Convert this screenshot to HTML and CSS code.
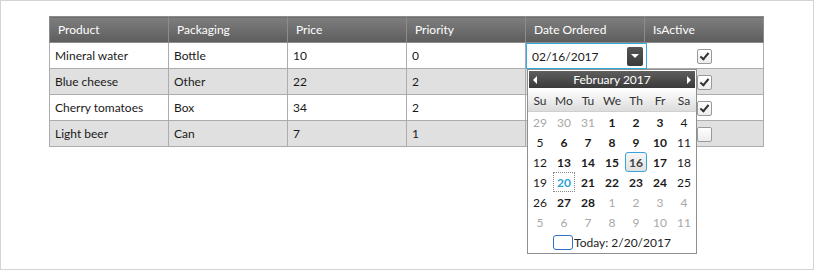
FILE: index.html
```html
<!DOCTYPE html>
<html lang="en">
<head>
  <meta charset="UTF-8">
  <title>Grid with date editor</title>
  <link rel="stylesheet" href="styles.css">
</head>
<body>
  <div class="frame">
    <table class="grid">
      <thead>
        <tr>
          <th>Product</th>
          <th>Packaging</th>
          <th>Price</th>
          <th>Priority</th>
          <th>Date Ordered</th>
          <th>IsActive</th>
        </tr>
      </thead>
      <tbody>
        <tr>
          <td>Mineral water</td>
          <td>Bottle</td>
          <td>10</td>
          <td>0</td>
          <td class="editing">
            <div class="date-editor">
              <span class="date-text">02/16/2017</span>
              <span class="drop-btn"><span class="caret"></span></span>
            </div>
            <div class="calendar">
              <div class="cal-head">
                <span class="arrow left"></span>
                <span class="cal-title">February 2017</span>
                <span class="arrow right"></span>
              </div>
              <div class="cal-names">
                <span>Su</span><span>Mo</span><span>Tu</span><span>We</span><span>Th</span><span>Fr</span><span>Sa</span>
              </div>
              <div class="cal-days">
                <span class="other">29</span><span class="other">30</span><span class="other">31</span><span class="wd">1</span><span class="wd">2</span><span class="wd">3</span><span>4</span>
                <span>5</span><span class="wd">6</span><span class="wd">7</span><span class="wd">8</span><span class="wd">9</span><span class="wd">10</span><span>11</span>
                <span>12</span><span class="wd">13</span><span class="wd">14</span><span class="wd">15</span><span class="wd selected">16</span><span class="wd">17</span><span>18</span>
                <span>19</span><span class="wd today">20</span><span class="wd">21</span><span class="wd">22</span><span class="wd">23</span><span class="wd">24</span><span>25</span>
                <span>26</span><span class="wd">27</span><span class="wd">28</span><span class="other">1</span><span class="other">2</span><span class="other">3</span><span class="other">4</span>
                <span class="other">5</span><span class="other">6</span><span class="other">7</span><span class="other">8</span><span class="other">9</span><span class="other">10</span><span class="other">11</span>
              </div>
              <div class="cal-today">
                <span class="today-box"></span>
                <span>Today: 2/20/2017</span>
              </div>
            </div>
          </td>
          <td class="check-cell"><span class="check checked"></span></td>
        </tr>
        <tr class="alt">
          <td>Blue cheese</td>
          <td>Other</td>
          <td>22</td>
          <td>2</td>
          <td></td>
          <td class="check-cell"><span class="check checked"></span></td>
        </tr>
        <tr>
          <td>Cherry tomatoes</td>
          <td>Box</td>
          <td>34</td>
          <td>2</td>
          <td></td>
          <td class="check-cell"><span class="check checked"></span></td>
        </tr>
        <tr class="alt">
          <td>Light beer</td>
          <td>Can</td>
          <td>7</td>
          <td>1</td>
          <td></td>
          <td class="check-cell"><span class="check"></span></td>
        </tr>
      </tbody>
    </table>
  </div>
</body>
</html>
```

FILE: styles.css
```css
body {
  margin: 0;
  font-family: 'Segoe UI', Lato, 'Open Sans', sans-serif;
  font-size: 12px;
  color: #1a1a1a;
}

.frame {
  box-sizing: border-box;
  width: 814px;
  height: 270px;
  border: 1px solid #d4d4d4;
  padding: 15px 0 0 48px;
}

.grid {
  border-collapse: collapse;
  table-layout: fixed;
  width: 715px;
}

.grid th,
.grid td {
  width: 119px;
  height: 26px;
  border: 1px solid #acacac;
  padding: 0 5px;
  text-align: left;
  white-space: nowrap;
  box-sizing: border-box;
}

.grid th {
  padding: 0 8px;
  font-weight: normal;
  color: #fff;
  background: linear-gradient(#7e7e7e, #5d5d5d);
  border-color: #8c8c8c;
}

.grid tr.alt td {
  background: #e0e0e0;
}

.editing {
  position: relative;
}

.date-editor {
  position: absolute;
  left: 0;
  top: 0;
  width: 121px;
  height: 26px;
  box-sizing: border-box;
  border: 1px solid #35a8e0;
  background: #fff;
  display: flex;
  align-items: center;
  justify-content: space-between;
  padding: 0 3px 0 5px;
}

.drop-btn {
  width: 16px;
  height: 19px;
  border-radius: 2px;
  background: linear-gradient(#555, #3a3a3a);
  display: flex;
  align-items: center;
  justify-content: center;
}

.caret {
  width: 0;
  height: 0;
  border-left: 4px solid transparent;
  border-right: 4px solid transparent;
  border-top: 4px solid #fff;
}

.calendar {
  position: absolute;
  left: 1px;
  top: 26px;
  z-index: 2;
  width: 168px;
  border: 1px solid #8f8f8f;
  background: #fff;
  padding: 1px 0 1px;
}

.cal-head {
  margin: 0 1px;
  height: 17px;
  background: linear-gradient(#5e5e5e, #3a3a3a);
  color: #fff;
  font-size: 12px;
  display: flex;
  align-items: center;
  justify-content: space-between;
  padding: 0 4px;
}

.arrow {
  width: 0;
  height: 0;
  border-top: 4px solid transparent;
  border-bottom: 4px solid transparent;
}

.arrow.left {
  border-right: 4px solid #fff;
}

.arrow.right {
  border-left: 4px solid #fff;
}

.cal-names {
  display: grid;
  grid-template-columns: repeat(7, 24px);
  height: 22px;
  margin-top: 1px;
  align-items: center;
  background: linear-gradient(#fff, #dcdcdc);
  border-bottom: 1px solid #cfcfcf;
  color: #333;
}

.cal-names span {
  text-align: center;
}

.cal-days {
  display: grid;
  grid-template-columns: repeat(7, 24px);
  grid-auto-rows: 20px;
  font-size: 12px;
}

.cal-days span {
  display: flex;
  align-items: center;
  justify-content: center;
  box-sizing: border-box;
  color: #1a1a1a;
}

.cal-days .wd {
  font-weight: bold;
}

.cal-days .other {
  color: #a8a8a8;
}

.cal-days .selected {
  border: 1px solid #3aa3dc;
  border-radius: 3px;
  background: linear-gradient(#f6f6f6, #e2e2e2);
  color: #444;
  margin: 0 1px;
}

.cal-days .today {
  border: 1px dotted #888;
  color: #2ea2da;
  margin: 0 1px;
}

.cal-today {
  height: 20px;
  display: flex;
  align-items: center;
  justify-content: center;
  gap: 1px;
  color: #222;
}

.today-box {
  width: 18px;
  height: 13px;
  border: 1px solid #2f6fc0;
  border-radius: 3px;
}

.grid td.check-cell {
  text-align: center;
}

.check {
  display: inline-block;
  vertical-align: middle;
  width: 13px;
  height: 13px;
  border: 1px solid #9a9a9a;
  border-radius: 2px;
  background: linear-gradient(#fff, #ececec);
  position: relative;
}

.check.checked::after {
  content: '';
  position: absolute;
  left: 4px;
  top: 1px;
  width: 3px;
  height: 7px;
  border-right: 2px solid #333;
  border-bottom: 2px solid #333;
  transform: rotate(40deg);
}
```
